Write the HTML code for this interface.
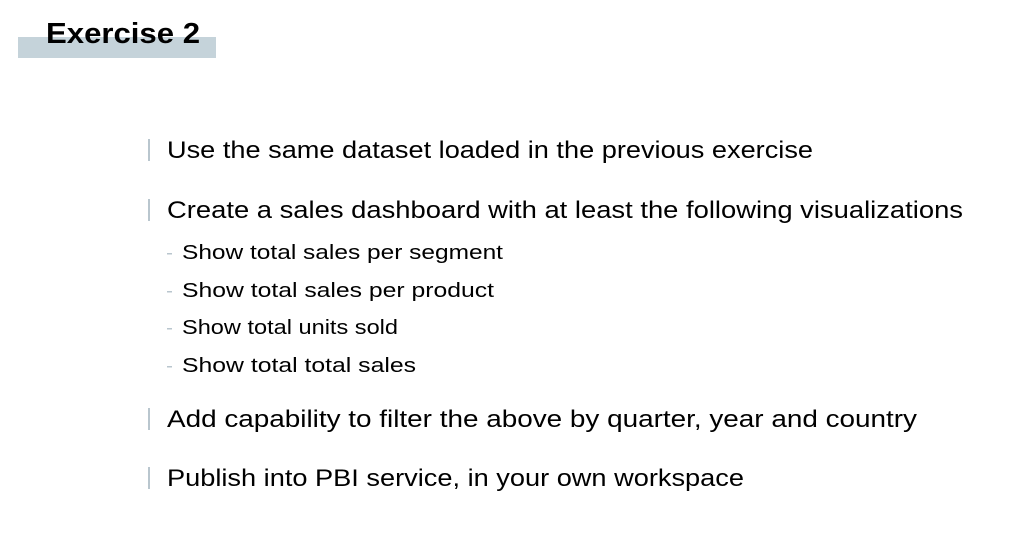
<!DOCTYPE html>
<html><head><meta charset="utf-8"><style>
html,body{margin:0;padding:0;background:#fff;width:1013px;height:556px;overflow:hidden}
svg{display:block}
text{font-family:"Liberation Sans",sans-serif;fill:#000}
</style></head><body>
<svg width="1013" height="556" viewBox="0 0 1013 556">
<rect x="18" y="37" width="198" height="21" fill="#c5d3da"/>
<text x="46" y="43" font-size="29" font-weight="bold" textLength="154" lengthAdjust="spacingAndGlyphs">Exercise 2</text>
<g fill="#b9c6ce">
<rect x="148" y="139" width="2" height="22"/>
<rect x="148" y="199" width="2" height="22"/>
<rect x="148" y="408" width="2" height="22"/>
<rect x="148" y="467" width="2" height="22"/>
<rect x="167" y="253" width="5" height="1.5"/>
<rect x="167" y="291" width="5" height="1.5"/>
<rect x="167" y="328" width="5" height="1.5"/>
<rect x="167" y="366" width="5" height="1.5"/>
</g>
<g font-size="24">
<text x="167" y="158" textLength="646" lengthAdjust="spacingAndGlyphs">Use the same dataset loaded in the previous exercise</text>
<text x="167" y="218" textLength="796" lengthAdjust="spacingAndGlyphs">Create a sales dashboard with at least the following visualizations</text>
<text x="167" y="427" textLength="750" lengthAdjust="spacingAndGlyphs">Add capability to filter the above by quarter, year and country</text>
<text x="167" y="486" textLength="577" lengthAdjust="spacingAndGlyphs">Publish into PBI service, in your own workspace</text>
</g>
<g font-size="20">
<text x="182" y="259" textLength="321" lengthAdjust="spacingAndGlyphs">Show total sales per segment</text>
<text x="182" y="297" textLength="312" lengthAdjust="spacingAndGlyphs">Show total sales per product</text>
<text x="182" y="334" textLength="216" lengthAdjust="spacingAndGlyphs">Show total units sold</text>
<text x="182" y="372" textLength="234" lengthAdjust="spacingAndGlyphs">Show total total sales</text>
</g>
</svg>
</body></html>
